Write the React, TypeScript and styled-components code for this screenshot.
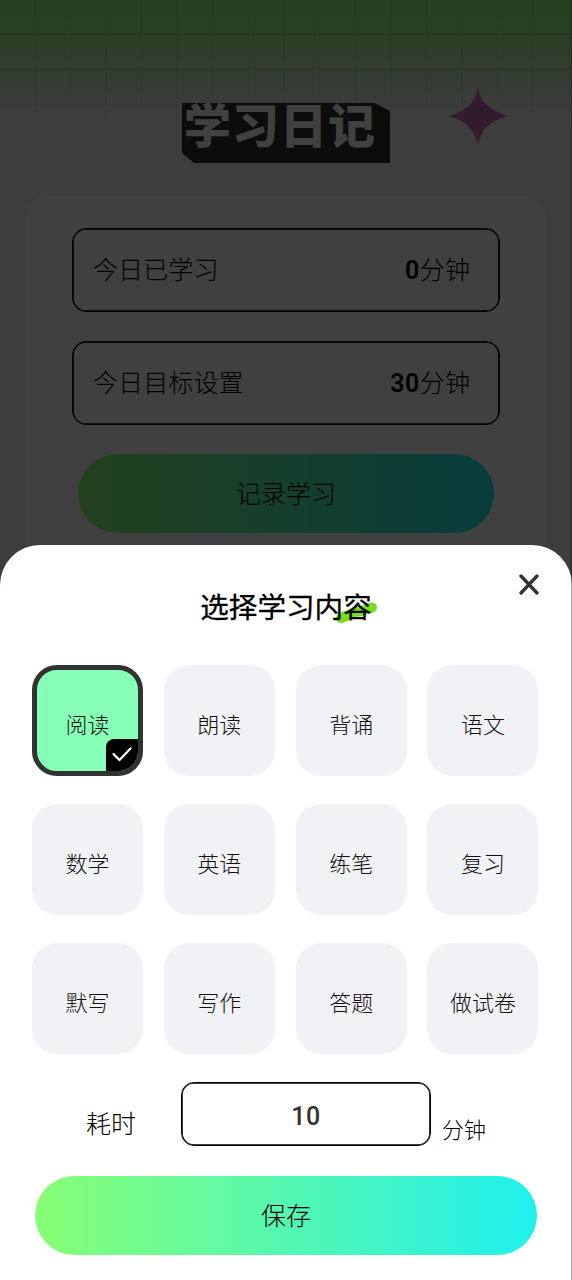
import React, { useState } from "react";
import styled, { createGlobalStyle, css } from "styled-components";

const GlobalStyle = createGlobalStyle`
  *, *::before, *::after { box-sizing: border-box; }
  body { margin: 0; background: #fff; }
  button { border: 0; padding: 0; background: none; color: inherit; font: inherit; cursor: pointer; }
`;

const Screen = styled.div`
  position: relative;
  height: 1280px;
  overflow: hidden;
  background: #f4f4f4;
  color: #000;
  font-family: Roboto, "Noto Sans CJK SC", sans-serif;
  font-weight: 300;
`;

const Header = styled.header`
  position: relative;
  height: 196px;
  padding: 103px 0 0 182px;
  background: linear-gradient(#9cff84 0, #9cff84 14px, #a8fa98 34px, #bcf4ac 58px, #d0ecc8 74px, #e0ece0 96px, #f0f4f0 118px, #f4f4f4 135px);

  &::before {
    content: "";
    position: absolute;
    inset: 0 0 auto;
    height: 146px;
    background:
      repeating-linear-gradient(90deg, transparent 0 34px, rgba(70, 150, 70, 0.14) 34px 35.6px),
      repeating-linear-gradient(transparent 0 33px, rgba(70, 150, 70, 0.14) 33px 35.4px);
    mask-image: linear-gradient(#000 40%, transparent);
  }
`;

const Title = styled.h1`
  position: relative;
  width: 208px;
  height: 60px;
  margin: 0;
  padding-left: 2px;
  background: #303030;
  clip-path: polygon(0 0, 193px 0, 100% 8px, 100% 100%, 12px 100%, 0 50px);
  color: #fff;
  font: 900 47px/40px "Noto Sans CJK SC", sans-serif;
  letter-spacing: 1px;
  white-space: nowrap;
`;

const Sparkle = styled.svg`
  position: absolute;
  left: 448px;
  top: 87px;
`;

const Card = styled.main`
  height: 700px;
  margin: 0 27px;
  padding: 32px 45px;
  border-radius: 20px;
  background: #fff;
  display: flex;
  flex-direction: column;
  gap: 29px;
`;

const StatRow = styled.div`
  flex: none;
  height: 84px;
  padding: 0 29px 4px 20px;
  border: 1px solid #000;
  box-shadow: inset 0 0 0 0.8px #000;
  border-radius: 14px;
  display: flex;
  align-items: center;
  justify-content: space-between;
  font-size: 25.1px;
`;

const Amount = styled.b`
  font-weight: 600;
  letter-spacing: 0.4px;
`;

const GradientButton = styled.button<{ $width: number }>`
  flex: none;
  align-self: center;
  display: block;
  width: ${(p) => p.$width}px;
  height: 79px;
  padding-bottom: 3px;
  border-radius: 40px;
  background: linear-gradient(90deg, #88ff74, #20f0ee);
  font-size: 25px;
`;

const Backdrop = styled.div`
  position: absolute;
  inset: 0;
  display: flex;
  flex-direction: column;
  justify-content: flex-end;
  background: rgba(0, 0, 0, 0.75);
`;

const Sheet = styled.section`
  position: relative;
  height: 735px;
  padding-top: 42px;
  border-radius: 40px 40px 0 0;
  background: #fff;
  display: flex;
  flex-direction: column;
  align-items: center;
`;

const SheetTitle = styled.h2`
  position: relative;
  margin: 0 0 36px;
  height: 42px;
  font-size: 28.6px;
  font-weight: 400;
  line-height: 42px;
  -webkit-text-stroke: 0.3px #000;
  span { position: relative; }
`;

const Swoosh = styled.svg`
  position: absolute;
  left: 134px;
  top: 13px;
`;

const Close = styled.button`
  position: absolute;
  right: 33px;
  top: 29px;
  width: 20px;
  height: 21px;
  svg { display: block; }
`;

const Options = styled.div`
  width: 506.5px;
  margin-right: 1.5px;
  display: grid;
  grid-template-columns: repeat(4, 111px);
  grid-auto-rows: 111px;
  justify-content: space-between;
  row-gap: 28px;
`;

const Option = styled.button<{ $active: boolean }>`
  position: relative;
  overflow: hidden;
  border-radius: 25px;
  background: #f1f2f6;
  color: #111;
  font-size: 22px;
  padding-top: 5px;
  ${(p) =>
    p.$active &&
    css`
      border: 5px solid #303330;
      background: #88ffb6;
    `}
`;

const Tick = styled.span`
  position: absolute;
  right: 0;
  bottom: 0;
  width: 32px;
  height: 32px;
  border-radius: 8px 0 0 0;
  background: #000;
  svg { display: block; }
`;

const Duration = styled.div`
  align-self: stretch;
  display: flex;
  align-items: center;
  height: 64px;
  margin: 28px 0 30px;
  padding-left: 86px;
`;

const DurationLabel = styled.label`
  width: 95px;
  padding-top: 16px;
  font-size: 25px;
`;

const DurationField = styled.input`
  width: 250px;
  height: 64px;
  border: 1px solid #000;
  box-shadow: inset 0 0 0 0.8px #000;
  border-radius: 13px;
  background: #fff;
  color: #333;
  font: 500 25px Roboto, sans-serif;
  letter-spacing: 0.5px;
  text-align: center;
  outline: 0;
  padding: 5px 0 0;
`;

const Unit = styled.span`
  padding: 27px 0 0 11px;
  font-size: 22px;
`;

const EdgeLine = styled.div`
  position: absolute;
  inset: 0 0 0 auto;
  width: 1px;
  background: rgba(0, 0, 0, 0.3);
`;

const subjects = ["阅读", "朗读", "背诵", "语文", "数学", "英语", "练笔", "复习", "默写", "写作", "答题", "做试卷"];

export default function App() {
  const [selected, setSelected] = useState("阅读");
  const [minutes, setMinutes] = useState("10");

  return (
    <Screen lang="zh-CN">
      <GlobalStyle />
      <Header>
        <Title>学习日记</Title>
        <Sparkle width="60" height="58" viewBox="0 0 60 58">
          <defs>
            <radialGradient id="sparkle">
              <stop offset="0" stopColor="#bc68b4" />
              <stop offset="1" stopColor="#dc70bc" />
            </radialGradient>
          </defs>
          <path d="M30 0C33 15 39 22 60 29C42 34 34 41 30 58C25 41 18 34 0 29C20 24 27 15 30 0Z" fill="url(#sparkle)" />
        </Sparkle>
      </Header>
      <Card>
        <StatRow>
          <span>今日已学习</span>
          <span><Amount>0</Amount>分钟</span>
        </StatRow>
        <StatRow>
          <span>今日目标设置</span>
          <span><Amount>30</Amount>分钟</span>
        </StatRow>
        <GradientButton $width={416}>记录学习</GradientButton>
      </Card>

      <Backdrop>
        <Sheet>
          <Close aria-label="关闭">
            <svg width="20" height="21" viewBox="0 0 20 21" fill="none" stroke="#333" strokeWidth="3.3" strokeLinecap="round">
              <path d="M2 2L18 19M18 2L2 19" />
            </svg>
          </Close>
          <SheetTitle>
            <Swoosh width="46" height="26" viewBox="0 0 46 26" fill="none" stroke="#78dc20" strokeWidth="10" strokeLinecap="round" strokeLinejoin="round">
              <path d="M7 18L17 14L21 12L27 11L38 7.5" />
            </Swoosh>
            <span>选择学习内容</span>
          </SheetTitle>
          <Options>
            {subjects.map((subject) => (
              <Option key={subject} $active={subject === selected} onClick={() => setSelected(subject)}>
                {subject}
                {subject === selected && (
                  <Tick>
                    <svg width="32" height="32" viewBox="0 0 32 32" fill="none" stroke="#fff" strokeWidth="2.2" strokeLinecap="round" strokeLinejoin="round">
                      <path d="M7.5 15L13.5 21L24.5 9.5" />
                    </svg>
                  </Tick>
                )}
              </Option>
            ))}
          </Options>
          <Duration>
            <DurationLabel htmlFor="minutes">耗时</DurationLabel>
            <DurationField id="minutes" value={minutes} onChange={(e) => setMinutes(e.target.value)} />
            <Unit>分钟</Unit>
          </Duration>
          <GradientButton $width={502}>保存</GradientButton>
        </Sheet>
      </Backdrop>
      <EdgeLine />
    </Screen>
  );
}
